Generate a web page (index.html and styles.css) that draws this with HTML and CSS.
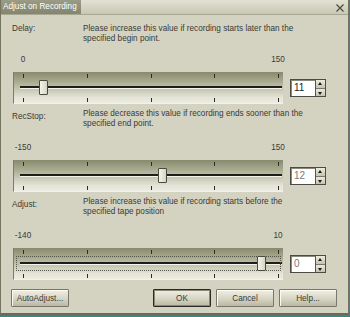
FILE: index.html
```html
<!DOCTYPE html>
<html lang="en">
    <head>
        <meta charset="UTF-8" />
        <title>Adjust on Recording</title>
        <link rel="stylesheet" href="styles.css">
    </head>
    <body>
        <div class="window">
            <div class="titlebar">
                <div class="title">Adjust on Recording</div>
                <div class="close">
                    <svg width="8" height="8" viewBox="0 0 8 8">
                        <path d="M0.5 0.5 L7.5 7.5 M7.5 0.5 L0.5 7.5" stroke="#4a4a40" stroke-width="1.2" fill="none" />
                    </svg>
                </div>
            </div>

            <div class="content">
                <!-- Delay -->
                <section class="setting first">
                    <div class="header">
                        <span class="label">Delay:</span>
                        <p class="desc">Please increase this value if recording starts later than the<br>specified begin point.</p>
                    </div>
                    <div class="scale"><span>0</span><span>150</span></div>
                    <div class="control">
                        <div class="slider">
                            <div class="ticks"><i></i><i></i><i></i><i></i><i></i></div>
                            <div class="groove"></div>
                            <div class="ticks bottom"><i></i><i></i><i></i><i></i><i></i></div>
                            <div class="thumb" style="left: 25px"></div>
                        </div>
                        <div class="spin">
                            <span class="field">11</span>
                            <span class="arrows"><b class="up"></b><b class="down"></b></span>
                        </div>
                    </div>
                </section>

                <!-- RecStop -->
                <section class="setting">
                    <div class="header">
                        <span class="label low">RecStop:</span>
                        <p class="desc">Please decrease this value if recording ends sooner than the<br>specified end point.</p>
                    </div>
                    <div class="scale"><span>-150</span><span>150</span></div>
                    <div class="control">
                        <div class="slider">
                            <div class="ticks"><i></i><i></i><i></i><i></i><i></i></div>
                            <div class="groove"></div>
                            <div class="ticks bottom"><i></i><i></i><i></i><i></i><i></i></div>
                            <div class="thumb" style="left: 144px"></div>
                        </div>
                        <div class="spin">
                            <span class="field dim">12</span>
                            <span class="arrows"><b class="up"></b><b class="down"></b></span>
                        </div>
                    </div>
                </section>

                <!-- Adjust -->
                <section class="setting">
                    <div class="header">
                        <span class="label low">Adjust:</span>
                        <p class="desc">Please increase this value if recording starts before the<br>specified tape position</p>
                    </div>
                    <div class="scale"><span>-140</span><span>10</span></div>
                    <div class="control">
                        <div class="slider focused">
                            <div class="ticks"><i></i><i></i><i></i><i></i><i></i></div>
                            <div class="groove"></div>
                            <div class="ticks bottom"><i></i><i></i><i></i><i></i><i></i></div>
                            <div class="focus-ring"></div>
                            <div class="thumb" style="left: 243px"></div>
                        </div>
                        <div class="spin">
                            <span class="field dim">0</span>
                            <span class="arrows"><b class="up"></b><b class="down"></b></span>
                        </div>
                    </div>
                </section>
            </div>

            <div class="buttons">
                <button class="btn auto">AutoAdjust...</button>
                <button class="btn default">OK</button>
                <button class="btn">Cancel</button>
                <button class="btn">Help...</button>
            </div>
        </div>
    </body>
</html>
```

FILE: styles.css
```css
* {
    box-sizing: border-box;
    margin: 0;
    padding: 0;
}
body {
    font-family: "Liberation Sans", Arial, sans-serif;
    font-size: 8.2px;
    background: #3a8585;
    color: #3a3a36;
}
.window {
    width: 349px;
    height: 315px;
    background: #d4d3c1;
    border-left: 1px solid #74745f;
    border-right: 1px solid #74745f;
    border-bottom: 2px solid #6a6a58;
}

/* Barra de título */
.titlebar {
    height: 15px;
    display: flex;
    align-items: flex-start;
    background: linear-gradient(#e2e1d3, #c9c8b5);
    border-bottom: 1px solid #a8a794;
}
.title {
    width: 80px;
    height: 14px;
    line-height: 14px;
    padding-left: 2px;
    background: linear-gradient(#9a9c86, #83856f);
    color: #fff;
    white-space: nowrap;
}
.close {
    margin-left: auto;
    margin-right: 4px;
    margin-top: 4px;
    height: 8px;
}
.close svg {
    display: block;
}

/* Conteúdo */
.content {
    padding: 9px 0 0 11px;
    display: flex;
    flex-direction: column;
    gap: 5px;
}
.header {
    display: flex;
    line-height: 10px;
}
.label {
    width: 71px;
    flex-shrink: 0;
}
.label.low {
    padding-top: 3px;
}
.desc {
    white-space: nowrap;
}
.scale {
    display: flex;
    justify-content: space-between;
    width: 275px;
    margin: 14px 0 0 1px;
    line-height: 10px;
}
.first .scale {
    margin-top: 11px;
}
.scale span {
    width: 20px;
    text-align: center;
}
.control {
    display: flex;
    align-items: center;
    gap: 7px;
    margin-top: 7px;
}

/* Slider */
.slider {
    position: relative;
    width: 270px;
    height: 32px;
    margin-left: 1px;
    padding-top: 2px;
    display: flex;
    flex-direction: column;
    background: linear-gradient(#878a6c, #b9baa2 45%, #e2e2d5 80%, #ecece2);
    border-left: 1px solid #7b7d64;
    border-bottom: 1px solid #f2f2ea;
}
.ticks {
    display: flex;
    justify-content: space-between;
    width: 256px;
    height: 4px;
    margin-left: 9px;
}
.ticks i {
    width: 1px;
    background: #2e2e28;
}
.ticks.bottom {
    margin-top: 9px;
}
.groove {
    height: 3px;
    margin: 8px 1px 0 6px;
    background: #1e1e1a;
    border-bottom: 1px solid #f4f4ec;
}
.thumb {
    position: absolute;
    top: 8px;
    width: 9px;
    height: 15px;
    background: linear-gradient(90deg, #f4f4ea, #d6d6c6);
    border: 1px solid #4a4a40;
    border-radius: 1px;
}
.focus-ring {
    position: absolute;
    left: 2px;
    right: 2px;
    top: 8px;
    height: 15px;
    border: 1px dotted #55554a;
}

/* Campo numérico */
.spin {
    display: flex;
    width: 36px;
    height: 18px;
    border: 1px solid #4c4c44;
    background: #fff;
}
.field {
    flex: 1;
    padding-left: 3px;
    font-size: 10px;
    line-height: 16px;
    color: #222;
    box-shadow: inset 1px 1px 0 #8a8a7c;
}
.field.dim {
    color: #7a7a74;
}
.arrows {
    width: 10px;
    display: flex;
    flex-direction: column;
    border-left: 1px solid #55554c;
    background: #cfcebd;
}
.arrows b {
    flex: 1;
    position: relative;
    background: linear-gradient(#ecebde, #c4c3b0);
    border-bottom: 1px solid #77776a;
}
.arrows b::after {
    content: "";
    position: absolute;
    left: 2px;
    border-left: 2.5px solid transparent;
    border-right: 2.5px solid transparent;
}
.arrows .up::after {
    top: 2px;
    border-bottom: 3px solid #1c1c18;
}
.arrows .down {
    border-bottom: none;
}
.arrows .down::after {
    top: 3px;
    border-top: 3px solid #1c1c18;
}

/* Botões */
.buttons {
    display: flex;
    gap: 5px;
    padding: 0 11px 0 10px;
    margin-top: 9px;
}
.btn {
    width: 58px;
    height: 18px;
    font-family: inherit;
    font-size: 8.2px;
    color: #3a3a36;
    background: linear-gradient(#f0efe4, #d6d5c3 55%, #b9b8a4);
    border: 1px solid #77776a;
    box-shadow: inset 1px 1px 0 #fbfbf4;
    border-radius: 1px;
}
.btn.auto {
    margin-right: auto;
}
.btn.default {
    border: 1px solid #2a2a24;
    box-shadow: inset 0 0 0 1px #8a8a7c;
}
```
